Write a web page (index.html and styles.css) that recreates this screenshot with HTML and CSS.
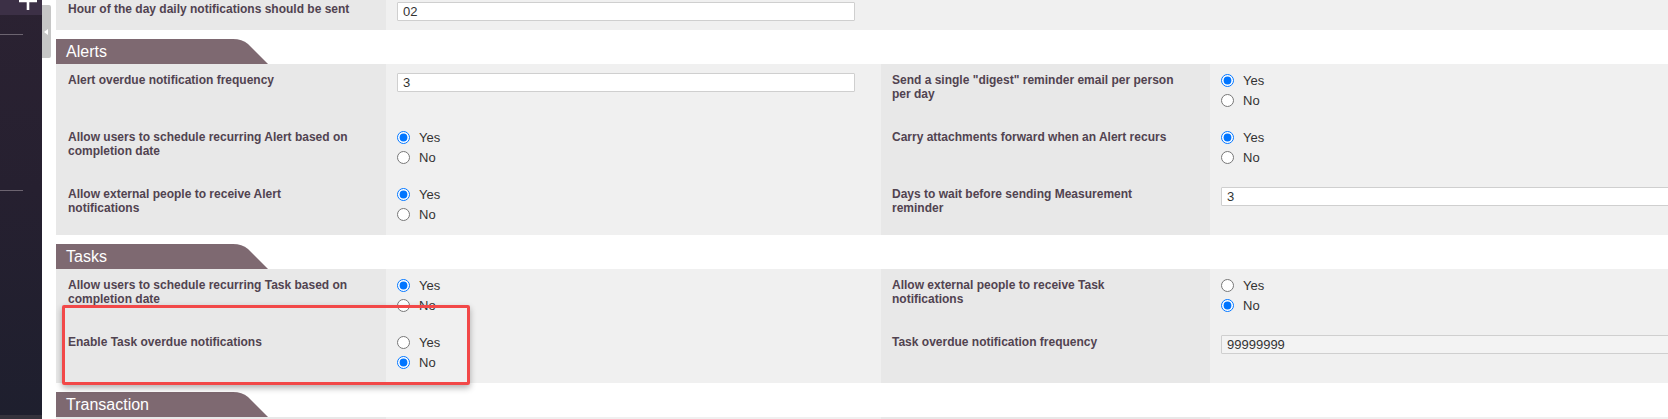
FILE: index.html
```html
<!DOCTYPE html>
<html lang="en">
<head>
<meta charset="utf-8">
<title>Notification settings</title>
<link rel="stylesheet" href="styles.css">
</head>
<body>
<div class="app">
  <aside class="sidebar">
    <div class="sb-top">
      <svg class="sb-plus" width="20" height="20" viewBox="0 0 20 20"><path d="M10 1 V19 M1 10 H19" stroke="#fff" stroke-width="2.6" fill="none"/></svg>
    </div>
    <div class="sb-line sb-line-1"></div>
    <div class="sb-line sb-line-2"></div>
    <div class="sb-bottom"></div>
  </aside>
  <div class="gutter">
    <div class="handle"><span class="tri"></span></div>
  </div>
  <main class="content">
    <div class="row row-single">
      <div class="cell label">Hour of the day daily notifications should be sent</div>
      <div class="cell value"><input class="text" type="text" value="02"></div>
    </div>

    <section class="section">
      <div class="tab">Alerts</div>
      <div class="row">
        <div class="cell label">Alert overdue notification frequency</div>
        <div class="cell value"><input class="text" type="text" value="3"></div>
        <div class="cell label">Send a single "digest" reminder email per person per day</div>
        <div class="cell value">
          <label class="opt"><input type="radio" name="digest" checked>Yes</label>
          <label class="opt"><input type="radio" name="digest">No</label>
        </div>
      </div>
      <div class="row">
        <div class="cell label">Allow users to schedule recurring Alert based on completion date</div>
        <div class="cell value">
          <label class="opt"><input type="radio" name="recA" checked>Yes</label>
          <label class="opt"><input type="radio" name="recA">No</label>
        </div>
        <div class="cell label">Carry attachments forward when an Alert recurs</div>
        <div class="cell value">
          <label class="opt"><input type="radio" name="carry" checked>Yes</label>
          <label class="opt"><input type="radio" name="carry">No</label>
        </div>
      </div>
      <div class="row">
        <div class="cell label">Allow external people to receive Alert notifications</div>
        <div class="cell value">
          <label class="opt"><input type="radio" name="extA" checked>Yes</label>
          <label class="opt"><input type="radio" name="extA">No</label>
        </div>
        <div class="cell label">Days to wait before sending Measurement reminder</div>
        <div class="cell value"><input class="text" type="text" value="3"></div>
      </div>
    </section>

    <section class="section">
      <div class="tab">Tasks</div>
      <div class="row">
        <div class="cell label">Allow users to schedule recurring Task based on completion date</div>
        <div class="cell value">
          <label class="opt"><input type="radio" name="recT" checked>Yes</label>
          <label class="opt"><input type="radio" name="recT">No</label>
        </div>
        <div class="cell label">Allow external people to receive Task notifications</div>
        <div class="cell value">
          <label class="opt"><input type="radio" name="extT">Yes</label>
          <label class="opt"><input type="radio" name="extT" checked>No</label>
        </div>
      </div>
      <div class="row">
        <div class="cell label">Enable Task overdue notifications</div>
        <div class="cell value">
          <label class="opt"><input type="radio" name="enT">Yes</label>
          <label class="opt"><input type="radio" name="enT" checked>No</label>
        </div>
        <div class="cell label">Task overdue notification frequency</div>
        <div class="cell value"><input class="text text-dim" type="text" value="99999999"></div>
      </div>
    </section>

    <section class="section">
      <div class="tab">Transaction</div>
      <div class="row">
        <div class="cell label"></div>
        <div class="cell value"></div>
        <div class="cell label"></div>
        <div class="cell value"></div>
      </div>
    </section>
  </main>
  <div class="highlight"></div>
</div>
</body>
</html>
```

FILE: styles.css
```css
html, body {
  margin: 0;
  padding: 0;
  height: 100%;
  overflow: hidden;
  background: #fff;
}

body {
  font-family: "Liberation Sans", Arial, sans-serif;
}

.app {
  position: relative;
  display: flex;
  height: 419px;
  overflow: hidden;
}

/* ---------- sidebar ---------- */
.sidebar {
  position: relative;
  flex: 0 0 42px;
  width: 42px;
  background: linear-gradient(180deg, #2b2232 0%, #262030 45%, #1e1f2e 100%);
}

.sb-top {
  position: relative;
  height: 15px;
  background: #3c3046;
  overflow: hidden;
}

.sb-plus {
  position: absolute;
  left: 18px;
  top: -9px;
}

.sb-line {
  position: absolute;
  left: 0;
  width: 23px;
  height: 1px;
  background: #6c6470;
}

.sb-line-1 { top: 34px; }
.sb-line-2 { top: 190px; }

.sb-bottom {
  position: absolute;
  left: 0;
  right: 0;
  bottom: 0;
  height: 4px;
  background: #34323c;
}

/* ---------- collapse handle ---------- */
.gutter {
  flex: 0 0 14px;
  width: 14px;
  background: #fff;
}

.handle {
  width: 9px;
  height: 53px;
  margin-top: 5px;
  background: #c6c6c6;
  border-radius: 0 2px 2px 0;
  display: flex;
  align-items: center;
  padding-left: 2px;
  box-sizing: border-box;
}

.tri {
  width: 0;
  height: 0;
  border-top: 3px solid transparent;
  border-bottom: 3px solid transparent;
  border-right: 4px solid #fff;
}

/* ---------- content ---------- */
.content {
  flex: 1 1 auto;
  min-width: 0;
  margin-top: -7px;
}

.row {
  display: grid;
  grid-template-columns: 330px 495px 329px 458px;
  height: 57px;
}

.row-single {
  grid-template-columns: 330px 1fr;
  height: 37px;
}

.cell {
  box-sizing: border-box;
  min-width: 0;
}

.label {
  background: #e8e8e8;
  padding: 9px 36px 0 12px;
  font-size: 12px;
  line-height: 14px;
  font-weight: bold;
  color: #514350;
}

.row .label:nth-child(3) {
  padding-left: 11px;
}

.value {
  background: #f0f0f0;
  padding: 6px 11px 0 11px;
  font-size: 13px;
  color: #333;
}

.text {
  display: block;
  box-sizing: border-box;
  width: 458px;
  height: 19px;
  margin: 3px 0 0 0;
  padding: 0 5px;
  border: 1px solid #cfcfcf;
  border-radius: 1px;
  background: #fff;
  font-family: "Liberation Sans", Arial, sans-serif;
  font-size: 13px;
  color: #333;
  outline: none;
}

.text-dim {
  background: #f3f3f3;
}

.opt {
  display: flex;
  align-items: center;
  height: 20px;
  font-size: 13px;
  color: #333;
}

.opt input {
  width: 13px;
  height: 13px;
  margin: 0 9px 0 0;
}

/* ---------- section tabs ---------- */
.section {
  margin-top: 9px;
}

.tab {
  width: 212px;
  height: 25px;
  box-sizing: border-box;
  padding-left: 10px;
  background: #7e6971;
  color: #fff;
  font-size: 16px;
  line-height: 25px;
  clip-path: path('M0 0 H177 Q186 0 192 5 L212 25 H0 Z');
}

/* ---------- annotation highlight ---------- */
.highlight {
  position: absolute;
  left: 62px;
  top: 305px;
  width: 408px;
  height: 80px;
  box-sizing: border-box;
  border: 3px solid #f24848;
  border-radius: 2px;
  box-shadow: 0 3px 6px rgba(0, 0, 0, 0.3);
  pointer-events: none;
}
```
